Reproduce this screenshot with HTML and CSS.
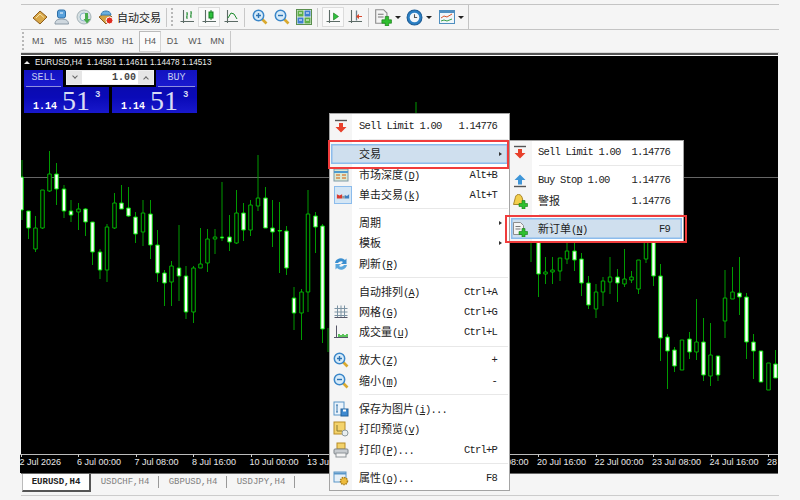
FILE: index.html
```html
<!DOCTYPE html>
<html>
<head>
    <meta charset="utf-8" />
    <title>EURUSD,H4</title>
    <link rel="stylesheet" href="styles.css">
</head>
<body>
    <svg class="defs">
        <symbol id="i-plus" viewBox="0 0 16 16"><path d="M10 7.500h3v3h2.500v3H13V16h-3v-2.500H7v-3h3z" fill="#2fbf2f" stroke="#167a16" stroke-width=".6"/></symbol>
        <symbol id="i-sell" viewBox="0 0 16 16"><path d="M2 2.500h12" stroke="#555" stroke-width="1.400"/><path d="M6 5h4v4h3.500L8 14.500 2.500 9H6z" fill="#e8412c"/></symbol>
        <symbol id="i-buy" viewBox="0 0 16 16"><path d="M2 14.500h12" stroke="#555" stroke-width="1.400"/><path d="M6 12.500h4V8h3.500L8 2.500 2.500 8H6z" fill="#3f96d8"/></symbol>
        <symbol id="i-bell" viewBox="0 0 16 16"><path d="M6.500 1.500c2.500 0 3.500 2 4 4.500l1.500 5.500H1.500L3 6c.5-2.500 1-4.500 3.500-4.500z" fill="#f3cf4c" stroke="#a9862a"/><use href="#i-plus"/></symbol>
        <symbol id="i-doc" viewBox="0 0 16 16"><path d="M1.500 1.500h7l3 3v9h-10z" fill="#f4f4f4" stroke="#8d8d8d"/><path d="M3.500 5.500h5M3.500 8h5" stroke="#777"/><use href="#i-plus"/></symbol>
        <symbol id="i-zoomin" viewBox="0 0 16 16"><path d="M10 10l4.500 4.500" stroke="#d9a92e" stroke-width="2.600"/><circle cx="6.500" cy="6.500" r="5.200" fill="#d7ebf9" stroke="#3b87c9" stroke-width="1.500"/><path d="M4 6.500h5M6.500 4v5" stroke="#2c73b3" stroke-width="1.400"/></symbol>
        <symbol id="i-zoomout" viewBox="0 0 16 16"><path d="M10 10l4.500 4.500" stroke="#d9a92e" stroke-width="2.600"/><circle cx="6.500" cy="6.500" r="5.200" fill="#d7ebf9" stroke="#3b87c9" stroke-width="1.500"/><path d="M4 6.500h5" stroke="#2c73b3" stroke-width="1.400"/></symbol>
        <symbol id="i-axes" viewBox="0 0 16 16"><path d="M4.500 1v13M1.500 12.500H15" stroke="#5c6b66" stroke-width="1.100" fill="none"/></symbol>
    </svg>

    <div class="page">
        <div class="bar bar-main">
            <div class="group">
                <span class="tool"><svg width="16" height="16" viewBox="0 0 16 16"><path d="M1 9l7-7 7 6-7 7z" fill="#d9a848" stroke="#8c5c1c"/><path d="M4 9l4-4 4 3.500" stroke="#f6e2a6" fill="none"/></svg></span>
                <span class="tool"><svg width="16" height="16" viewBox="0 0 16 16"><rect x="3.500" y="1" width="8" height="8" rx="2" fill="#5aa2dc" stroke="#2d6ea6"/><path d="M6 4h3" stroke="#fff"/><path d="M1 15c0-4 3-5 6.500-5s7 1 7 5z" fill="#cfd8df" stroke="#8a99a5"/></svg></span>
                <span class="tool"><svg width="16" height="16" viewBox="0 0 16 16"><circle cx="8" cy="8" r="7" fill="#d5dfe2" stroke="#a6b3b8"/><circle cx="8" cy="8" r="4" fill="#eef3f4" stroke="#8fb5c8"/><path d="M9 4h3v6h2.500L11 14.500 7.500 10H9z" fill="#49ac4c"/></svg></span>
                <span class="tool tool-wide"><svg width="16" height="16" viewBox="0 0 16 16"><path d="M1 8l7-5 6 5-6 7z" fill="#d3a242" stroke="#8c5c1c"/><path d="M3 6c0-3 3-4 5-4s5 1 5 4z" fill="#6ab0e0" stroke="#3a7db2"/><circle cx="11.500" cy="11.500" r="3.500" fill="#e02c20" stroke="#fff"/></svg>自动交易</span>
                <i class="sep"></i><i class="grip"></i>
                <span class="tool"><svg width="16" height="16" viewBox="0 0 16 16"><use href="#i-axes"/><path d="M8 3v7M7 8h1M8 5h1M12 2v7M11 7h1M12 4h1" stroke="#1c8a2c" fill="none"/></svg></span>
                <span class="tool active"><svg width="16" height="16" viewBox="0 0 16 16"><use href="#i-axes"/><path d="M10 1v10" stroke="#1c8a2c"/><rect x="8" y="3" width="4" height="6" fill="#2cc23c" stroke="#157a20"/></svg></span>
                <span class="tool"><svg width="16" height="16" viewBox="0 0 16 16"><use href="#i-axes"/><path d="M5 9l3-5 3 1 3 5" stroke="#1c8a2c" fill="none"/></svg></span>
                <i class="sep"></i>
                <span class="tool"><svg width="16" height="16"><use href="#i-zoomin"/></svg></span>
                <span class="tool"><svg width="16" height="16"><use href="#i-zoomout"/></svg></span>
                <span class="tool"><svg width="16" height="16" viewBox="0 0 16 16"><rect x=".5" y=".5" width="15" height="15" fill="#e6efe6" stroke="#5a8e4e"/><rect x="1.500" y="1.500" width="6" height="6" fill="#5fb04a"/><rect x="8.500" y="1.500" width="6" height="6" fill="#3f7fd0"/><rect x="1.500" y="8.500" width="6" height="6" fill="#3f7fd0"/><rect x="8.500" y="8.500" width="6" height="6" fill="#5fb04a"/><path d="M3 4h3M10 4h3M3 11h3M10 11h3" stroke="#fff"/></svg></span>
                <i class="sep"></i>
                <span class="tool active"><svg width="16" height="16" viewBox="0 0 16 16"><use href="#i-axes"/><path d="M8.500 4l5 3.500-5 3.500z" fill="#2fbf3f" stroke="#167a16" stroke-width=".6"/></svg></span>
                <span class="tool"><svg width="16" height="16" viewBox="0 0 16 16"><use href="#i-axes"/><path d="M9.500 1.500v10" stroke="#6c7f8a" stroke-width="1.300"/><path d="M15 7h-3V5l-3 2.500 3 2.500V8h3z" fill="#d9472c"/></svg></span>
                <i class="sep sep-tight"></i>
                <span class="tool tool-drop"><svg width="18" height="18" viewBox="0 0 16 16"><use href="#i-doc"/></svg><i class="drop"></i></span>
                <span class="tool tool-drop"><svg width="17" height="17" viewBox="0 0 16 16"><circle cx="8" cy="8" r="7" fill="#2a7fc4" stroke="#1c5c96"/><circle cx="8" cy="8" r="4.500" fill="#f2f6f9"/><path d="M8 5v3h2.500" stroke="#555" fill="none"/></svg><i class="drop"></i></span>
                <span class="tool tool-drop"><svg width="16" height="16" viewBox="0 0 16 16"><rect x=".5" y="1.500" width="15" height="13" fill="#f0f6fa" stroke="#4f8fc0"/><rect x="1" y="2" width="14" height="2" fill="#4f8fc0"/><path d="M2 9l3-2 3 1 5-3" stroke="#d9572c" fill="none"/><path d="M2 12l3-1 3 1 5-2" stroke="#3aa04a" fill="none"/></svg><i class="drop"></i></span>
            </div>
        </div>
        <div class="bar bar-periods">
            <i class="grip"></i>
            <span class="tf">M1</span>
            <span class="tf">M5</span>
            <span class="tf">M15</span>
            <span class="tf">M30</span>
            <span class="tf">H1</span>
            <span class="tf tf-on">H4</span>
            <span class="tf">D1</span>
            <span class="tf">W1</span>
            <span class="tf">MN</span>
            <i class="sep"></i>
        </div>

        <div class="chart">
            <div class="plot">
                <svg class="candles" width="757" height="398" viewBox="21 56 757 398">
                    <path class="priceline" d="M21 177.500H778"/>
                    <path class="wick" d="M22 160V220M28.500 211V239M35.500 216V252M42.500 190V229M49.500 151V192M56.500 163V205M64 185V218M71 200V222M78.500 203V230M85.500 208V236M92.500 222V265M100 249V279M107 224V282M114.500 193V229M121.500 185V209M128.500 187V217M135.500 212V243M143 200V246M150.500 200V259M157.500 230V282M164.500 270V306M171.500 261V306M179 225V301M186 266V319M193.500 266V323M200.500 228V268M207.500 229V272M215 229V254M222 182V241M229.500 215V251M236.500 190V244M243.500 203V241M250.500 200V236M258 155V211M265.500 187V228M272.500 200V247M279.500 202V273M286.500 226V275M294 287V330M301.500 289V340M308 190V312M315.500 212V253M322.500 224V343M328 328V352M416 102V113"/>
                    <path class="wick" d="M531 240V262M538.500 240V297M545.500 257V284M552.500 257V284M560 258V281M567 243V264M574.500 243V271M581.500 253V296M588.500 276V309M596 284V318M603 277V306M610 257V294M617.500 269V302M624.500 249V287M631.500 271V283M638.500 260V294M646 240V263M653.500 240V286M660.500 264V361M667.500 334V389M674.500 347V372M682 340V370M689.500 332V359M696.500 299V360M703.500 318V381M710.500 323V386M718 356V381M725 270V338M732.500 267V299M739.500 257V315M746.500 293V359M753.500 334V379M761 351V382M768.500 363V390M775.500 350V378"/>
                    <path class="hollow" d="M33.750 228h3.500v21h-3.500zM40.750 190h3.500v38h-3.500zM47.750 174h3.500v17h-3.500zM76.750 209h3.500v3h-3.500zM105.250 227h3.500v43h-3.500zM112.750 203h3.500v25h-3.500zM141.250 213h3.500v19h-3.500zM169.750 266h3.500v16h-3.500zM191.750 268h3.500v44h-3.500zM198.750 264h3.500v4h-3.500zM205.750 239h3.500v24h-3.500zM213.250 237h3.500v2h-3.500zM234.750 213h3.500v30h-3.500zM248.750 205h3.500v25h-3.500zM256.250 198h3.500v8h-3.500zM299.750 292h3.500v21h-3.500zM306.250 214h3.500v78h-3.500z"/>
                    <path class="hollow" d="M543.750 272h3.500v2h-3.500zM550.750 270h3.500v2h-3.500zM558.250 258h3.500v13h-3.500zM565.250 251h3.500v8h-3.500zM594.250 292h3.500v17h-3.500zM601.250 281h3.500v11h-3.500zM608.250 277h3.500v5h-3.500zM622.750 279h3.500v5h-3.500zM629.750 277h3.500v3h-3.500zM636.750 260h3.500v29h-3.500zM644.250 240h3.500v19h-3.500zM680.250 340h3.500v30h-3.500zM694.750 342h3.500v10h-3.500zM708.750 355h3.500v21h-3.500zM723.250 298h3.500v23h-3.500zM730.750 292h3.500v7h-3.500zM766.750 363h3.500v27h-3.500z"/>
                    <path class="solid" d="M20.250 177h3v33h-3zM26.750 211h3.500v17h-3.500zM54.750 174h3.500v15h-3.500zM62.250 189h3.500v22h-3.500zM69.250 211h3.500v4h-3.500zM83.750 209h3.500v13h-3.500zM90.750 222h3.500v30h-3.500zM98.250 252h3.500v18h-3.500zM119.750 203h3.500v6h-3.500zM126.750 208h3.500v8h-3.500zM133.750 217h3.500v17h-3.500zM148.750 214h3.500v31h-3.500zM155.750 245h3.500v28h-3.500zM162.750 273h3.500v10h-3.500zM177.250 268h3.500v8h-3.500zM184.250 276h3.500v36h-3.500zM220.500 237h3v1h-3zM227.750 237h3.500v5h-3.500zM241.750 213h3.500v17h-3.500zM263.750 198h3.500v30h-3.500zM270.750 228h3.500v4h-3.500zM278 230.500h3.500v.5h-3.500zM284.750 231h3.500v37h-3.500zM292.250 298h3.500v15h-3.500zM313.750 216h3.500v11h-3.500zM320.750 226h3.500v103h-3.500z"/>
                    <path class="solid" d="M536.750 240h3.500v34h-3.500zM572.750 251h3.500v9h-3.500zM579.750 259h3.500v24h-3.500zM586.750 283h3.500v22h-3.500zM615.750 277h3.500v6h-3.500zM651.750 240h3.500v36h-3.500zM658.750 276h3.500v62h-3.500zM665.750 337h3.500v14h-3.500zM672.750 350h3.500v16h-3.500zM687.750 339h3.500v13h-3.500zM701.750 342h3.500v33h-3.500zM716.250 356h3.500v19h-3.500zM737.750 293h3.500v4h-3.500zM744.750 297h3.500v45h-3.500zM751.750 342h3.500v9h-3.500zM759.250 351h3.500v31h-3.500zM773.750 364h3.500v14h-3.500z"/>
                </svg>
                <div class="quote"><i class="quote-arrow"></i>EURUSD,H4&nbsp; 1.14581 1.14611 1.14478 1.14513</div>
                <div class="trade">
                    <div class="trade-top">
                        <div class="side side-sell"><span>SELL</span></div>
                        <div class="lot"><b class="spin"><i class="chev"></i></b><span class="lot-val">1.00</span><b class="spin"><i class="chev chev-up"></i></b></div>
                        <div class="side side-buy"><span>BUY</span></div>
                    </div>
                    <div class="trade-prices">
                        <div class="price"><span class="p-small">1.14</span><span class="p-big">51</span><span class="p-sup">3</span></div>
                        <div class="price"><span class="p-small">1.14</span><span class="p-big">51</span><span class="p-sup">3</span></div>
                    </div>
                </div>
            </div>
            <div class="axis">
                <span class="tick">2 Jul 2026</span>
                <span class="tick">6 Jul 00:00</span>
                <span class="tick">7 Jul 08:00</span>
                <span class="tick">8 Jul 16:00</span>
                <span class="tick">10 Jul 00:00</span>
                <span class="tick">13 Jul 08:00</span>
                <span class="tick">14 Jul 16:00</span>
                <span class="tick">16 Jul 00:00</span>
                <span class="tick">17 Jul 08:00</span>
                <span class="tick">20 Jul 16:00</span>
                <span class="tick">22 Jul 00:00</span>
                <span class="tick">23 Jul 08:00</span>
                <span class="tick">24 Jul 16:00</span>
                <span class="tick">28</span>
            </div>
        </div>

        <div class="tabs">
            <span class="tab tab-on">EURUSD,H4</span>
            <span class="tab">USDCHF,H4</span>
            <span class="tab">GBPUSD,H4</span>
            <span class="tab">USDJPY,H4</span>
        </div>
        <div class="statusline"></div>
    </div>

    <div class="menu menu-main">
        <div class="row"><span class="ico"><svg width="16" height="16"><use href="#i-sell"/></svg></span><span class="lbl lat">Sell Limit 1.00</span><span class="key">1.14776</span></div>
        <div class="line"></div>
        <div class="row row-on"><span class="ico"></span><span class="lbl">交易</span><i class="more"></i></div>
        <div class="row"><span class="ico"><svg width="16" height="16" viewBox="0 0 16 16"><rect x="1" y="2" width="14" height="12" fill="#dbe9d4" stroke="#7e9aa8"/><path d="M1 5h14" stroke="#4f9bd0" stroke-width="2"/><path d="M3 8h4M9 8h4M3 11h4M9 11h4" stroke="#d98b4a" stroke-width="1.500"/></svg></span><span class="lbl">市场深度<span class="lat">(<u>D</u>)</span></span><span class="key">Alt+B</span></div>
        <div class="row"><span class="ico ico-on"><svg width="16" height="16" viewBox="0 0 16 16"><path d="M1 7l3 1.500L7 7v5H1z" fill="#d93a30"/><rect x="7" y="9" width="3" height="3" fill="#999"/><path d="M10 8l2.500 1L15 7v5h-5z" fill="#3d7fc0"/></svg></span><span class="lbl">单击交易<span class="lat">(<u>k</u>)</span></span><span class="key">Alt+T</span></div>
        <div class="line"></div>
        <div class="row"><span class="ico"></span><span class="lbl">周期</span><i class="more"></i></div>
        <div class="row"><span class="ico"></span><span class="lbl">模板</span><i class="more"></i></div>
        <div class="row"><span class="ico"><svg width="16" height="16" viewBox="0 0 16 16"><path d="M2 7a6 6 0 0 1 10-3l1.500-1.500V8H8l2-2a3.500 3.500 0 0 0-5 1z" fill="#3a8ed0"/><path d="M14 9a6 6 0 0 1-10 3l-1.500 1.500V8H8l-2 2a3.500 3.500 0 0 0 5-1z" fill="#5aa6dc"/></svg></span><span class="lbl">刷新<span class="lat">(<u>R</u>)</span></span></div>
        <div class="line"></div>
        <div class="row"><span class="ico"></span><span class="lbl">自动排列<span class="lat">(<u>A</u>)</span></span><span class="key">Ctrl+A</span></div>
        <div class="row"><span class="ico"><svg width="16" height="16" viewBox="0 0 16 16"><path d="M4.500 1.500v12M8 1.500v12M11.500 1.500v12M1.500 4.500h13M1.500 8h13M1.500 11.500h13" stroke="#7d93a3" fill="none"/><path d="M1.500 13.500h13" stroke="#556" fill="none"/></svg></span><span class="lbl">网格<span class="lat">(<u>G</u>)</span></span><span class="key">Ctrl+G</span></div>
        <div class="row"><span class="ico"><svg width="16" height="16" viewBox="0 0 16 16"><path d="M3.500 1.500v12M1 13.500h14" stroke="#556" fill="none"/><path d="M6 13v-3M8 13v-2M10 13v-3M12 13v-2M14 13v-3" stroke="#28b428" stroke-width="1.500"/></svg></span><span class="lbl">成交量<span class="lat">(<u>u</u>)</span></span><span class="key">Ctrl+L</span></div>
        <div class="line"></div>
        <div class="row"><span class="ico"><svg width="16" height="16"><use href="#i-zoomin"/></svg></span><span class="lbl">放大<span class="lat">(<u>Z</u>)</span></span><span class="key">+</span></div>
        <div class="row"><span class="ico"><svg width="16" height="16"><use href="#i-zoomout"/></svg></span><span class="lbl">缩小<span class="lat">(<u>m</u>)</span></span><span class="key">-</span></div>
        <div class="line"></div>
        <div class="row"><span class="ico"><svg width="16" height="16" viewBox="0 0 16 16"><rect x="1" y="1" width="10" height="13" fill="#eaf3fb" stroke="#5a96c8"/><path d="M4 4v7M3 4h2M3 11h2" stroke="#3a78ae"/><rect x="8" y="8" width="7" height="7" fill="#3f8ad0" stroke="#24629c"/><rect x="10" y="8.500" width="3" height="2" fill="#fff"/></svg></span><span class="lbl">保存为图片<span class="lat">(<u>i</u>)...</span></span></div>
        <div class="row"><span class="ico"><svg width="16" height="16" viewBox="0 0 16 16"><rect x="1" y="1" width="11" height="12" fill="#f3d26a" stroke="#b88c24"/><path d="M4 4v6h5" stroke="#8c7a30" fill="none"/><circle cx="12" cy="12" r="3" fill="#e8eef0" stroke="#8e9a9e"/></svg></span><span class="lbl">打印预览<span class="lat">(<u>v</u>)</span></span></div>
        <div class="row"><span class="ico"><svg width="16" height="16" viewBox="0 0 16 16"><rect x="4" y="1" width="8" height="6" fill="#f3d26a" stroke="#b88c24"/><rect x="1" y="7" width="14" height="5" rx="1" fill="#c8ccd0" stroke="#7f858a"/><rect x="3" y="11" width="10" height="4" fill="#f4f4f4" stroke="#8e9498"/></svg></span><span class="lbl">打印<span class="lat">(<u>P</u>)...</span></span><span class="key">Ctrl+P</span></div>
        <div class="line"></div>
        <div class="row"><span class="ico"><svg width="16" height="16" viewBox="0 0 16 16"><rect x="1" y="2" width="12" height="10" fill="#e6f0f8" stroke="#5a96c8"/><path d="M1 3.500h12" stroke="#5a96c8" stroke-width="2"/><circle cx="11" cy="11" r="3.500" fill="#eebc3c" stroke="#a87e1c" stroke-width="1.500" stroke-dasharray="1.500 .8"/></svg></span><span class="lbl">属性<span class="lat">(<u>o</u>)...</span></span><span class="key">F8</span></div>
        <div class="redbox redbox-trade"></div>
    </div>

    <div class="menu menu-sub">
        <div class="row"><span class="ico"><svg width="16" height="16"><use href="#i-sell"/></svg></span><span class="lbl lat">Sell Limit 1.00</span><span class="key">1.14776</span></div>
        <div class="line"></div>
        <div class="row"><span class="ico"><svg width="16" height="16"><use href="#i-buy"/></svg></span><span class="lbl lat">Buy Stop 1.00</span><span class="key">1.14776</span></div>
        <div class="row"><span class="ico"><svg width="16" height="16"><use href="#i-bell"/></svg></span><span class="lbl">警报</span><span class="key">1.14776</span></div>
        <div class="line"></div>
        <div class="row row-on"><span class="ico"><svg width="16" height="16"><use href="#i-doc"/></svg></span><span class="lbl">新订单<span class="lat">(<u>N</u>)</span></span><span class="key">F9</span></div>
    </div>
    <div class="redbox redbox-order"></div>
</body>
</html>
```
FILE: styles.css
```css
* {
    box-sizing: border-box;
}
body {
    margin: 0;
    width: 800px;
    height: 500px;
    overflow: hidden;
    position: relative;
    background-color: #f5f5f5;
    font-family: "Liberation Sans", "Noto Sans CJK SC", sans-serif;
    font-size: 9px;
    color: #222;
}
.defs {
    display: none;
}
.page {
    padding: 4px 21px 0;
}

/* toolbars */
.bar {
    display: flex;
    align-items: center;
    border-top: 1px solid #c4c4c4;
}
.bar-main {
    height: 25px;
}
.bar-periods {
    height: 24px;
    padding-left: 1px;
    border-bottom: 1px solid #d8d8d8;
}
.group {
    display: flex;
    align-items: center;
    height: 24px;
    width: 448px;
    padding-left: 8px;
    border-right: 1px solid #c4c4c4;
}
.tool {
    display: flex;
    align-items: center;
    justify-content: center;
    width: 22px;
    height: 20px;
    flex: none;
}
.tool-wide {
    width: 69px;
    justify-content: flex-start;
    gap: 3px;
    padding-left: 3px;
    font-size: 11px;
    color: #222;
}
.tool-drop {
    width: 32px;
    gap: 3px;
}
.active {
    background-color: #fafafa;
    border: 1px solid #dcdcdc;
}
.sep {
    display: block;
    width: 1px;
    height: 19px;
    margin: 0 4px 0 2px;
    background-color: #c8c8c8;
    flex: none;
}
.sep-tight {
    margin-right: 2px;
}
.grip {
    display: block;
    width: 2px;
    height: 18px;
    margin-right: 3px;
    border-left: 2px dotted #b8b8b8;
    flex: none;
}
.drop {
    display: block;
    border-left: 3px solid transparent;
    border-right: 3px solid transparent;
    border-top: 3px solid #222;
}
.tf {
    width: 22.4px;
    height: 21px;
    line-height: 21px;
    text-align: center;
    color: #555;
    flex: none;
}
.tf-on {
    background-color: #fbfbfb;
    border: 1px solid #d4d4d4;
    border-top-color: #bbb;
    border-left-color: #bbb;
    line-height: 19px;
}
.bar-periods .sep {
    height: 21px;
    margin-left: 1px;
}

/* chart */
.chart {
    border-top: 2px solid #555;
    padding-top: 1px;
    background: linear-gradient(#fff 1px, #000 1px);
    width: 757px;
    height: 421px;
    border-bottom: 2px solid #666;
    color: #fff;
}
.plot {
    position: relative;
    height: 398px;
    background-color: #000;
    overflow: hidden;
}
.candles {
    display: block;
}
.priceline {
    stroke: #666;
}
.wick {
    stroke: #009a00;
    fill: none;
}
.hollow {
    fill: #000;
    stroke: #00b400;
}
.solid {
    fill: #fff;
    stroke: #00e000;
}
.quote {
    position: absolute;
    left: 3px;
    top: 2px;
    display: flex;
    align-items: center;
    font-size: 8.2px;
    color: #eee;
    white-space: pre;
}
.quote-arrow {
    width: 0;
    height: 0;
    margin-right: 5px;
    border-left: 3px solid transparent;
    border-right: 3px solid transparent;
    border-bottom: 3px solid #eee;
}
.trade {
    position: absolute;
    left: 3px;
    top: 14px;
    width: 173px;
    color: #d8dcf4;
}
.trade-top {
    display: flex;
    gap: 3px;
    height: 17px;
}
.side {
    width: 39px;
    padding: 0 2px;
    background: linear-gradient(#1212c0, #1a1ad0);
    font: 10px "Liberation Mono", monospace;
    text-align: center;
    color: #c4ccf0;
}
.side-buy {
    width: 41px;
    margin-left: -1px;
}
.side span {
    display: block;
    height: 17px;
    line-height: 15px;
    border-bottom: 1px solid #8f8fe0;
}
.lot {
    display: flex;
    width: 88px;
    height: 15px;
    background-color: #fff;
    border: 1px solid #eee;
}
.spin {
    display: flex;
    align-items: center;
    justify-content: center;
    width: 15px;
    background-color: #e6e6e6;
    flex: none;
}
.lot-val {
    flex: 1;
    padding-right: 2px;
    text-align: right;
    color: #444;
    font: bold 10px/13px "Liberation Mono", monospace;
}
.chev {
    width: 4px;
    height: 4px;
    margin-top: -3px;
    border-right: 1px solid #666;
    border-bottom: 1px solid #666;
    transform: rotate(45deg);
}
.chev-up {
    margin-top: 3px;
    transform: rotate(225deg);
}
.trade-prices {
    display: flex;
    gap: 3px;
}
.price {
    display: flex;
    width: 85px;
    height: 26px;
    padding-left: 9px;
    background: linear-gradient(#0a0ab0, #0a0ab8 40%, #1818cc);
}
.p-small {
    align-self: flex-end;
    width: 29px;
    margin-bottom: 1px;
    color: #fff;
    font: bold 10px "Liberation Mono", monospace;
}
.p-big {
    font: 28px/27px "Liberation Serif", serif;
}
.p-sup {
    margin: 0 0 0 5px;
    font: bold 9px/16px "Liberation Mono", monospace;
}
.axis {
    display: grid;
    grid-auto-flow: column;
    grid-auto-columns: 57.5px;
    height: 19px;
    margin-left: -1.5px;
    overflow: hidden;
    background: linear-gradient(#bbb 1px, #000 1px);
}
.tick {
    white-space: nowrap;
    color: #e8e8e8;
    line-height: 10px;
}
.tick::before {
    content: "";
    display: block;
    width: 1px;
    height: 3px;
    margin-left: 1px;
    background-color: #ccc;
}

/* bottom tabs */
.tabs {
    display: flex;
    height: 18px;
    font: 9px/17px "Liberation Mono", monospace;
    color: #808080;
}
.tab {
    width: 68px;
    text-align: center;
    position: relative;
}
.tab::after {
    content: "";
    position: absolute;
    right: 0;
    top: 2px;
    height: 12px;
    border-right: 1px solid #999;
}
.tab-on {
    width: 69px;
    margin-left: 1px;
    background-color: #fff;
    color: #222;
    font-weight: bold;
    border-left: 1px solid #bbb;
    border-right: 2px solid #555;
    border-bottom: 2px solid #555;
}
.tab-on::after {
    display: none;
}
.statusline {
    margin-top: 3px;
    border-top: 1px solid #ccc;
}

/* context menus */
.menu {
    position: absolute;
    padding: 2px 1px;
    border: 1px solid #a4a4a4;
    font-size: 11px;
    color: #222;
}
.menu-main {
    left: 329px;
    top: 113px;
    width: 181px;
    height: 378px;
    background: linear-gradient(to right, #f5f5f5 22px, #fff 22px);
}
.menu-sub {
    left: 509px;
    top: 140px;
    width: 175px;
    height: 102px;
    padding-top: 1px;
    background: linear-gradient(to right, #f5f5f5 22px, #fff 22px);
}
.row {
    position: relative;
    display: flex;
    align-items: center;
    height: 20.400px;
    padding-right: 11px;
    line-height: 20px;
}
.menu-sub .row {
    padding-right: 12px;
}
.row-on {
    background-color: #cfdfee;
    box-shadow: inset 0 0 0 1.500px #8cbcec;
}
.ico {
    display: flex;
    align-items: center;
    width: 28px;
    padding-left: 2px;
    flex: none;
}
.menu-sub .ico {
    width: 27px;
    padding-left: 1px;
}
.ico-on {
    margin-left: 1px;
    width: 27px;
}
.ico-on svg {
    width: 18px;
    height: 18px;
    padding: 1px;
    background-color: #d4e6f5;
    border: 1px solid #8cbcec;
}
.lbl {
    flex: 1;
    white-space: nowrap;
}
.lat,
.key {
    font: 10.500px "Liberation Mono", monospace;
    letter-spacing: -.8px;
    color: #222;
}
.more {
    width: 0;
    height: 0;
    margin-right: -5px;
    border-top: 2.500px solid transparent;
    border-bottom: 2.500px solid transparent;
    border-left: 3px solid #333;
}
.line {
    height: 7.600px;
    padding-top: 3px;
    margin-left: 28px;
}
.line::before {
    content: "";
    display: block;
    border-top: 1px solid #e8e8e8;
}
.redbox {
    position: absolute;
    border: 2px solid #f03c3c;
    pointer-events: none;
}
.redbox-trade {
    left: -2px;
    top: 26px;
    width: 181px;
    height: 29px;
}
.redbox-order {
    left: 505px;
    top: 215px;
    width: 182px;
    height: 28px;
}
```
